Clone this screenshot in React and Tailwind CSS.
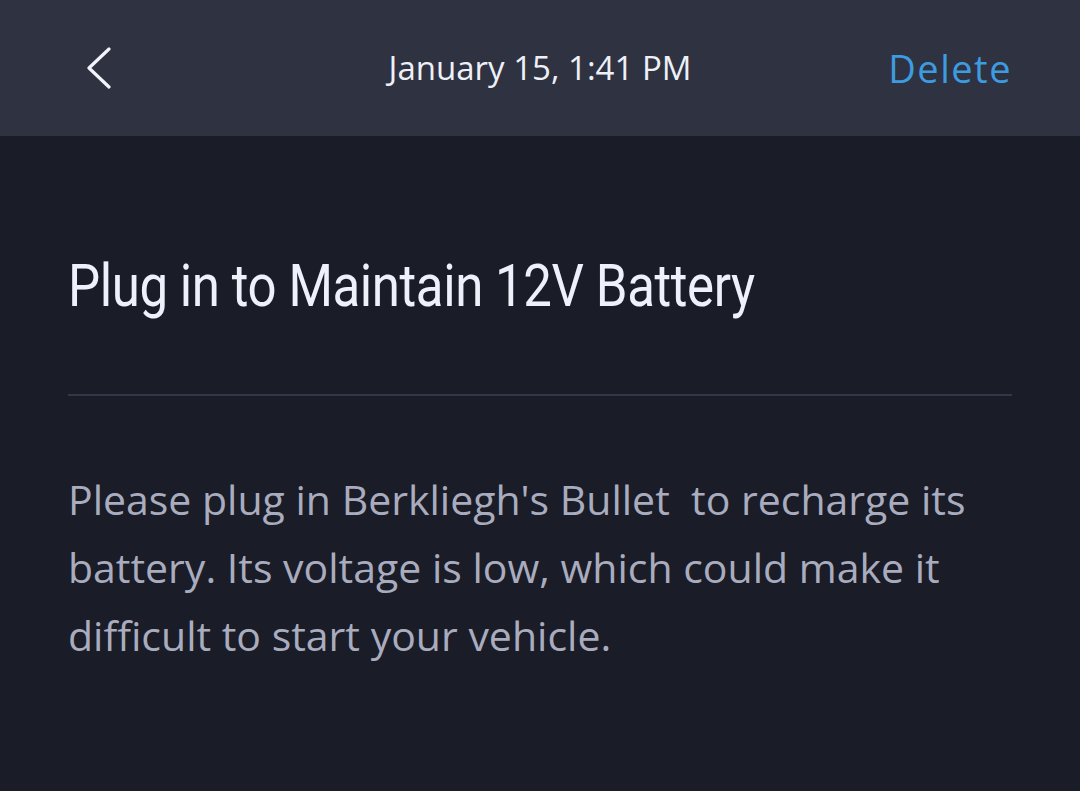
import React from 'react';

const App = () => {
  return (
    <div className="w-[1080px] h-[791px] bg-[#1a1c27] flex flex-col" style={{ fontFamily: '"Open Sans", Lato, sans-serif' }}>
      <div className="h-[136px] bg-[#2f3241] flex items-center px-[68px] shrink-0">
        <div className="flex-1 flex items-center">
          <button className="flex items-center text-[#f2f4fb]">
            <svg width="26" height="42" viewBox="0 0 26 42" fill="none" className="ml-[18px]">
              <path d="M23 2 L3 21 L23 40" stroke="currentColor" strokeWidth="3.2" strokeLinecap="round" strokeLinejoin="round" />
            </svg>
          </button>
        </div>
        <div className="text-[33px] text-[#eef0f8]">January 15, 1:41 PM</div>
        <div className="flex-1 flex justify-end">
          <button className="text-[38px] tracking-[1.5px] text-[#3d9be0]">Delete</button>
        </div>
      </div>
      <div className="px-[68px]">
        <h1 className="mt-[114px] text-[60px] leading-[72px] text-[#eef0fa] tracking-[-0.5px] whitespace-nowrap origin-left scale-x-[0.85]" style={{ fontFamily: 'Roboto, sans-serif' }}>
          Plug in to Maintain 12V Battery
        </h1>
        <div className="mt-[72px] h-[2px] bg-[#34374a]" />
        <p className="mt-[69px] text-[41px] leading-[68px] text-[#a9acbe]">
          Please plug in Berkliegh's Bullet&nbsp; to recharge its battery. Its voltage is low, which could make it difficult to start your vehicle.
        </p>
      </div>
    </div>
  );
};

export default App;
